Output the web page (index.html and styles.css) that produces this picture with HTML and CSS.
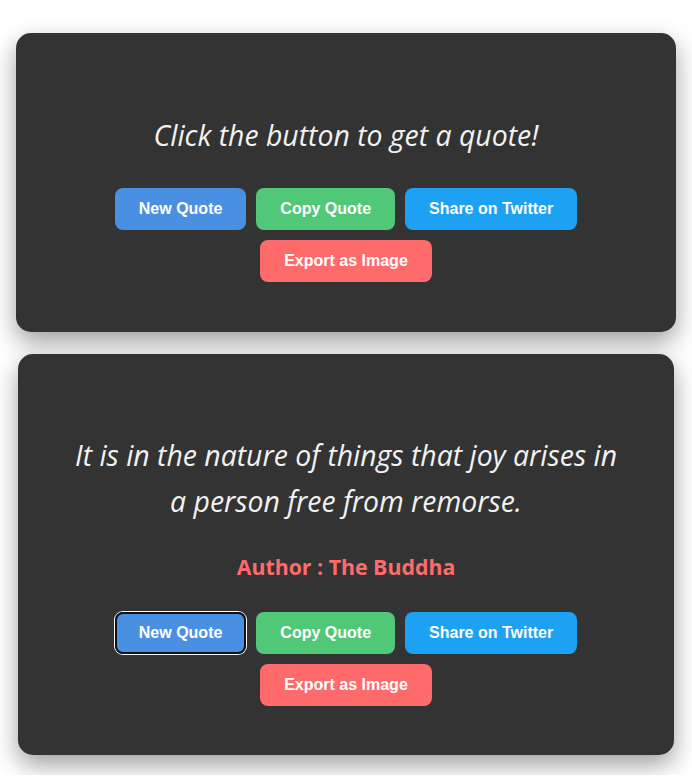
FILE: index.html
```html
<!DOCTYPE html>
<html lang="en">
<head>
<meta charset="utf-8">
<title>Quote Generator</title>
<link rel="stylesheet" href="styles.css">
</head>
<body>
<main class="page">
  <section class="card card-first">
    <p class="quote">Click the button to get a quote!</p>
    <div class="actions">
      <button class="btn btn-new">New Quote</button>
      <button class="btn btn-copy">Copy Quote</button>
      <button class="btn btn-share">Share on Twitter</button>
      <button class="btn btn-export">Export as Image</button>
    </div>
  </section>
  <section class="card card-second">
    <p class="quote">It is in the nature of things that joy arises in a person free from remorse.</p>
    <p class="author">Author : The Buddha</p>
    <div class="actions">
      <button class="btn btn-new is-focused">New Quote</button>
      <button class="btn btn-copy">Copy Quote</button>
      <button class="btn btn-share">Share on Twitter</button>
      <button class="btn btn-export">Export as Image</button>
    </div>
  </section>
</main>
</body>
</html>
```
FILE: styles.css
```css
* { box-sizing: border-box; }
html, body { margin: 0; padding: 0; background: #ffffff; }
.page {
  padding: 33px 16px 20px;
  display: flex;
  flex-direction: column;
  gap: 22px;
}
.card {
  background: #333333;
  border-radius: 15px;
  box-shadow: 0 10px 24px rgba(0, 0, 0, 0.38);
  padding: 41px 40px 45px;
  text-align: center;
}
.card-second { margin: 0 2px; padding-top: 40px; padding-bottom: 44px; }
.quote {
  margin: 38px auto 25px;
  max-width: 560px;
  font-family: "Open Sans", "Noto Sans", sans-serif;
  font-style: italic;
  font-size: 28.4px;
  line-height: 46px;
  color: #f2f2f2;
}
.author {
  margin: 0 0 22px;
  font-family: "Open Sans", "Noto Sans", sans-serif;
  font-weight: 700;
  font-size: 21.3px;
  line-height: 36px;
  color: #ff6b6b;
}
.actions {
  display: flex;
  flex-wrap: wrap;
  justify-content: center;
  max-width: 520px;
  margin: 0 auto;
}
.btn {
  margin: 5px;
  padding: 12px 24px;
  border: none;
  border-radius: 8px;
  font-family: "Liberation Sans", Arial, sans-serif;
  font-weight: 700;
  font-size: 16px;
  line-height: 18px;
  color: #ffffff;
  cursor: pointer;
}
.btn-new { background: #4a90e2; }
.btn-copy { background: #50c878; }
.btn-share { background: #1da1f2; }
.btn-export { background: #ff6b6b; }
.is-focused {
  box-shadow: 0 0 0 1px #ffffff, inset 0 0 0 2px #101010;
}
```
